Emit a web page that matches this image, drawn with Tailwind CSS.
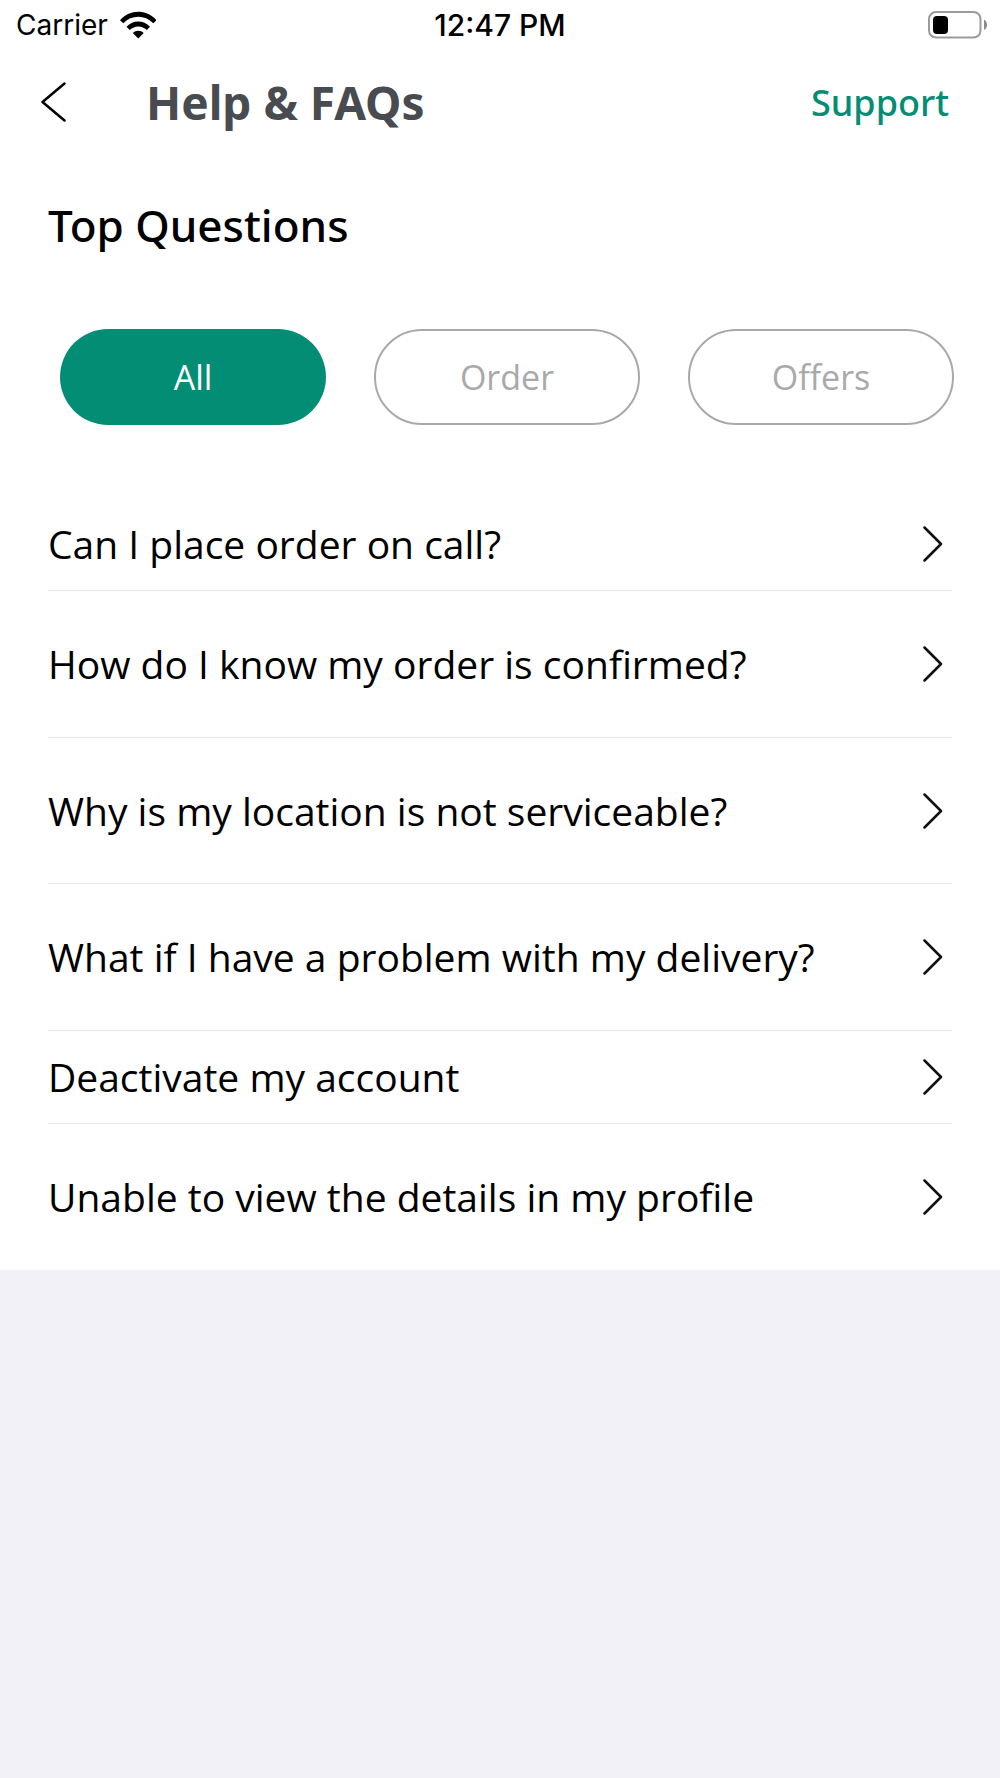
<!DOCTYPE html>
<html lang="en">
<head>
<meta charset="utf-8">
<meta name="viewport" content="width=device-width, initial-scale=1">
<title>Help &amp; FAQs</title>
<script src="https://cdn.jsdelivr.net/npm/@tailwindcss/browser@4"></script>
</head>
<body class="min-h-screen bg-[#f2f1f7] font-['Open_Sans',sans-serif] text-black">
<div class="bg-white">
  <div class="grid h-[50px] grid-cols-3 items-center pl-4 pr-4 font-['Inter',sans-serif] text-[28px] leading-none">
    <div class="flex items-center gap-3">
      <span>Carrier</span>
      <svg class="h-7 w-9" viewBox="0 0 36 28" aria-label="Wi-Fi">
        <path d="M0 9.2C10 -2 26.500 -2 36.500 9.200L33.300 12.300C25 3.700 11.500 3.700 3.200 12.300Z"/>
        <path d="M6.500 15.700C13 8.800 23.500 8.800 30 15.700L26.800 18.900C22 14.200 14.500 14.200 9.700 18.900Z"/>
        <path d="M12.800 22C16 19 20.500 19 23.700 22L18.250 27.500Z"/>
      </svg>
    </div>
    <span class="text-center text-[30px] font-medium">12:47 PM</span>
    <svg class="h-7 w-14 justify-self-end overflow-visible" viewBox="0 0 56 28" aria-label="Battery">
      <rect x="1" y="1" width="51.500" height="25.500" rx="7" fill="none" stroke="#9b9b9b" stroke-width="2"/>
      <rect x="5" y="5" width="15" height="18" rx="4"/>
      <path d="M56 8.500C60 11 60 16.500 56 19Z" fill="#8a8a8a"/>
    </svg>
  </div>

  <header class="flex h-[104px] items-center pl-8 pr-[51px] font-['Noto_Sans',sans-serif]">
    <button type="button" class="flex h-16 w-16 items-center pl-2" aria-label="Back">
      <svg class="h-10 w-7" viewBox="0 0 28 40" fill="none" stroke="#000" stroke-width="2.500" stroke-linecap="round" stroke-linejoin="round"><path d="M24.500 1.500L2.500 20L24.500 38.500"/></svg>
    </button>
    <h1 class="ml-[50px] text-[46px] leading-none font-bold text-[#484b4f]">Help &amp; FAQs</h1>
    <a href="#" class="ml-auto pt-0.5 text-[36px] leading-none font-medium text-[#038d74]">Support</a>
  </header>

  <main>
    <h2 class="px-12 pt-10 font-['Noto_Sans',sans-serif] text-[44px] leading-[62px] font-medium">Top Questions</h2>

    <div class="mt-[73px] grid grid-cols-3 gap-12 pr-[46px] pl-[60px] text-[34px]">
      <button type="button" class="h-24 rounded-full bg-[#038d74] text-white">All</button>
      <button type="button" class="h-24 rounded-full border-2 border-[#a9a9a9] text-[#a9a9a9]">Order</button>
      <button type="button" class="h-24 rounded-full border-2 border-[#a9a9a9] text-[#a9a9a9]">Offers</button>
    </div>

    <ul class="mt-[73px] px-12 text-[39px] leading-[54px]">
      <li class="border-b border-[#e6e6e6]">
        <a href="#" class="flex h-[92px] items-center justify-between pr-2">Can I place order on call?
          <svg class="h-9 w-6" viewBox="0 0 24 36" fill="none" stroke="#111" stroke-width="2.500" stroke-linecap="round" stroke-linejoin="round"><path d="M4.500 1.500L21 18L4.500 34.500"/></svg></a>
      </li>
      <li class="border-b border-[#e6e6e6]">
        <a href="#" class="flex h-[146px] items-center justify-between pr-2">How do I know my order is confirmed?
          <svg class="h-9 w-6" viewBox="0 0 24 36" fill="none" stroke="#111" stroke-width="2.500" stroke-linecap="round" stroke-linejoin="round"><path d="M4.500 1.500L21 18L4.500 34.500"/></svg></a>
      </li>
      <li class="border-b border-[#e6e6e6]">
        <a href="#" class="flex h-[145px] items-center justify-between pr-2">Why is my location is not serviceable?
          <svg class="h-9 w-6" viewBox="0 0 24 36" fill="none" stroke="#111" stroke-width="2.500" stroke-linecap="round" stroke-linejoin="round"><path d="M4.500 1.500L21 18L4.500 34.500"/></svg></a>
      </li>
      <li class="border-b border-[#e6e6e6]">
        <a href="#" class="flex h-[146px] items-center justify-between pr-2">What if I have a problem with my delivery?
          <svg class="h-9 w-6" viewBox="0 0 24 36" fill="none" stroke="#111" stroke-width="2.500" stroke-linecap="round" stroke-linejoin="round"><path d="M4.500 1.500L21 18L4.500 34.500"/></svg></a>
      </li>
      <li class="border-b border-[#e6e6e6]">
        <a href="#" class="flex h-[92px] items-center justify-between pr-2">Deactivate my account
          <svg class="h-9 w-6" viewBox="0 0 24 36" fill="none" stroke="#111" stroke-width="2.500" stroke-linecap="round" stroke-linejoin="round"><path d="M4.500 1.500L21 18L4.500 34.500"/></svg></a>
      </li>
      <li>
        <a href="#" class="flex h-[146px] items-center justify-between pr-2">Unable to view the details in my profile
          <svg class="h-9 w-6" viewBox="0 0 24 36" fill="none" stroke="#111" stroke-width="2.500" stroke-linecap="round" stroke-linejoin="round"><path d="M4.500 1.500L21 18L4.500 34.500"/></svg></a>
      </li>
    </ul>
  </main>
</div>
</body>
</html>
